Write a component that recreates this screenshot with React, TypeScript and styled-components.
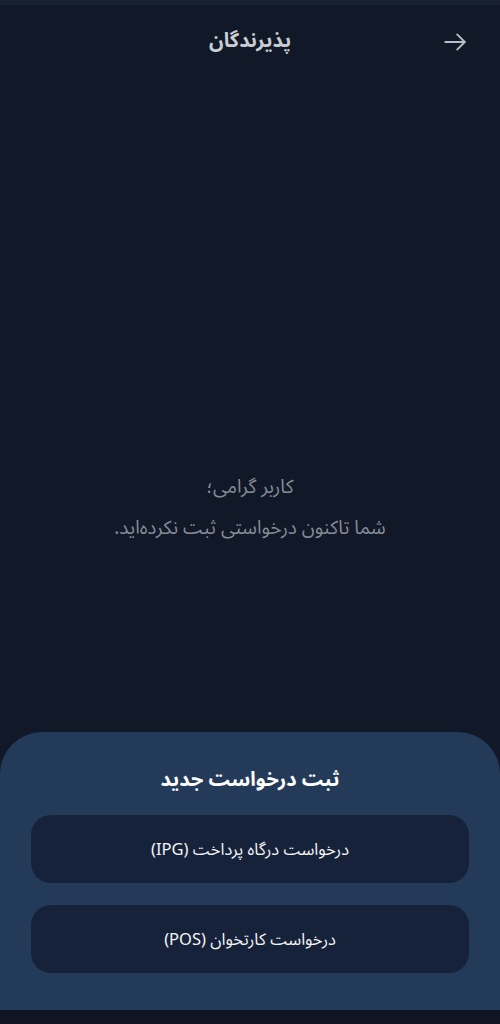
import { createGlobalStyle, styled } from "styled-components"

const Global = createGlobalStyle`
    html, body {
        margin: 0;
        padding: 0;
        background: #111827;
    }
    * { box-sizing: border-box; }
`

const Page = styled.div`
    direction: rtl;
    height: 1024px;
    display: flex;
    flex-direction: column;
    background: #111827;
    border-top: 5px solid #172033;
    border-bottom: 14px solid #0f1522;
    font-family: "Noto Sans Arabic", "Vazirmatn", "DejaVu Sans", sans-serif;
    overflow: hidden;
`

const TopBar = styled.header`
    position: relative;
    height: 72px;
    display: flex;
    align-items: center;
    justify-content: center;
`

const Title = styled.h1`
    margin: 0;
    font-size: 20px;
    font-weight: 700;
    color: #c9ccd2;
`

const BackButton = styled.button`
    position: absolute;
    right: 31px;
    top: 23px;
    width: 28px;
    height: 28px;
    padding: 0;
    border: none;
    background: none;
    color: #b9bdc6;
    display: flex;
    align-items: center;
    justify-content: center;
`

const Empty = styled.main`
    flex: 1;
    display: flex;
    flex-direction: column;
    align-items: center;
    justify-content: center;
    gap: 15px;
    padding-top: 206px;
    color: #858b96;
    font-size: 19px;
    line-height: 26px;
`

const Line = styled.p`
    margin: 0;
`

const Sheet = styled.section`
    background: #243a59;
    border-radius: 42px 42px 0 0;
    padding: 36px 31px 37px;
    display: flex;
    flex-direction: column;
    gap: 22px;
`

const SheetTitle = styled.h2`
    margin: 0 0 1px;
    text-align: center;
    font-size: 20px;
    line-height: 24px;
    font-weight: 700;
    color: #ffffff;
`

const Option = styled.button`
    height: 68px;
    border: none;
    border-radius: 20px;
    background: #16223a;
    color: #f3f4f6;
    font-family: inherit;
    font-size: 16.5px;
    direction: rtl;
`

export default function App() {
    return (
        <>
            <Global />
            <Page>
                <TopBar>
                    <Title>پذیرندگان</Title>
                    <BackButton aria-label="بازگشت">
                        <svg width="26" height="26" viewBox="0 0 24 24" fill="none" stroke="currentColor" strokeWidth="1.7" strokeLinecap="round" strokeLinejoin="round">
                            <path d="M3 12h18" />
                            <path d="M14 5l7 7-7 7" />
                        </svg>
                    </BackButton>
                </TopBar>
                <Empty>
                    <Line>کاربر گرامی؛</Line>
                    <Line>شما تاکنون درخواستی ثبت نکرده‌اید.</Line>
                </Empty>
                <Sheet>
                    <SheetTitle>ثبت درخواست جدید</SheetTitle>
                    <Option>درخواست درگاه پرداخت (IPG)</Option>
                    <Option>درخواست کارتخوان (POS)</Option>
                </Sheet>
            </Page>
        </>
    )
}
